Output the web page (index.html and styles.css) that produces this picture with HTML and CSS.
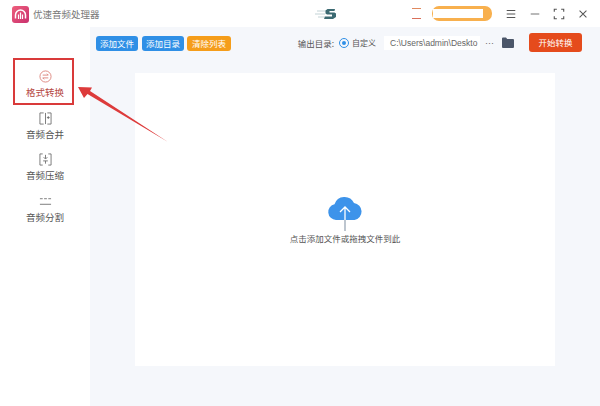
FILE: index.html
```html
<!DOCTYPE html>
<html lang="zh-CN">

<head>
    <meta charset="UTF-8">
    <title>优速音频处理器</title>
    <link rel="stylesheet" href="styles.css">
</head>

<body>
    <div class="app">
        <div class="titlebar">
            <div class="brand">
                <svg class="logo" viewBox="0 0 17 17">
                    <defs>
                        <linearGradient id="logoFill" x1="0" y1="0" x2="1" y2="1">
                            <stop offset="0" stop-color="#ee5f7c"/>
                            <stop offset="1" stop-color="#c9306e"/>
                        </linearGradient>
                    </defs>
                    <rect width="17" height="17" rx="3" fill="url(#logoFill)"/>
                    <path d="M3.5 12.5V9a5 5 0 0 1 10 0v3.5" fill="none" stroke="#fff" stroke-width="1.5"/>
                    <path d="M6.5 13V8.500M8.500 13V6.500M10.500 13V8.500" stroke="#fff" stroke-width="1.200"/>
                </svg>
                <span class="appname">优速音频处理器</span>
            </div>
            <svg class="midlogo" viewBox="0 0 30 16">
                <path d="M5 5h9M3 8h10M6 11h7" stroke="#c3d3d6" stroke-width="1"/>
                <path d="M23 3h-7.500l-2 1.500v3l1.500 1h5v2h-7l-1 2.500h9l3-2v-3.500l-1.500-1h-5v-1.500h5z" fill="#3c6a72"/>
            </svg>
            <div class="userbox">
                <span class="redmark"></span>
                <div class="vip"><span class="vipwhite"></span></div>
            </div>
            <div class="winbtns">
                <svg viewBox="0 0 14 14"><path d="M2 3h10M2 7h10M2 11h10" stroke="#555" stroke-width="1.200"/></svg>
                <svg viewBox="0 0 14 14"><path d="M2 7h10" stroke="#777" stroke-width="1.200"/></svg>
                <svg viewBox="0 0 14 14"><path d="M1.500 4.500v-3h3M9.500 1.500h3v3M12.500 9.500v3h-3M4.500 12.500h-3v-3" fill="none" stroke="#555" stroke-width="1.300"/></svg>
                <svg viewBox="0 0 14 14"><path d="M3 3l8 8M11 3l-8 8" stroke="#555" stroke-width="1.200"/></svg>
            </div>
        </div>

        <div class="content">
            <div class="sidebar">
                <div class="navitem active">
                    <svg viewBox="0 0 14 14">
                        <circle cx="7" cy="7" r="6" fill="none" stroke="#d9786f" stroke-width="0.900"/>
                        <path d="M4 5.500h6M4 8.500h6M8.500 4l1.500 1.500M5.500 10L4 8.500" fill="none" stroke="#d9786f" stroke-width="0.900"/>
                    </svg>
                    <span>格式转换</span>
                </div>
                <div class="navitem">
                    <svg viewBox="0 0 14 14">
                        <path d="M5 1H1v12h4M9 1h4v12H9M7 1v12" fill="none" stroke="#666" stroke-width="0.900"/>
                        <path d="M8.500 6h3M10 4.500v3" stroke="#666" stroke-width="0.900"/>
                    </svg>
                    <span>音频合并</span>
                </div>
                <div class="navitem">
                    <svg viewBox="0 0 14 14">
                        <path d="M4 1H1v12h3M10 1h3v12h-3" fill="none" stroke="#666" stroke-width="0.900"/>
                        <path d="M7 2v4M5 4.500L7 6.500l2-2M4.500 8.500h5M7 8.500v3" fill="none" stroke="#666" stroke-width="0.900"/>
                    </svg>
                    <span>音频压缩</span>
                </div>
                <div class="navitem">
                    <svg viewBox="0 0 14 14">
                        <path d="M1 4h3M5.500 4h3M10 4h3M1 10h12" fill="none" stroke="#666" stroke-width="0.900"/>
                    </svg>
                    <span>音频分割</span>
                </div>
            </div>

            <div class="main">
                <div class="toolbar">
                    <button class="btn blue">添加文件</button>
                    <button class="btn blue">添加目录</button>
                    <button class="btn orange">清除列表</button>
                    <div class="output">
                        <span class="outlabel">输出目录:</span>
                        <span class="radio"></span>
                        <span class="custom">自定义</span>
                        <span class="pathbox">C:\Users\admin\Deskto</span>
                        <span class="dots">···</span>
                        <svg class="folder" viewBox="0 0 12 11">
                            <path d="M0 1.500A1 1 0 0 1 1 .5h3l1.200 1.500H11a1 1 0 0 1 1 1V10a1 1 0 0 1-1 1H1a1 1 0 0 1-1-1z" fill="#4b5669"/>
                        </svg>
                        <button class="btn start">开始转换</button>
                    </div>
                </div>
                <div class="droparea">
                    <svg class="cloud" viewBox="0 0 36 37">
                        <path d="M9 25a8 8 0 0 1-1.500-15.800A10.500 10.500 0 0 1 27 8a8.600 8.600 0 0 1 .5 17z" fill="#3d93ea"/>
                        <path d="M18 25V12M13 17l5-5 5 5" fill="none" stroke="#fff" stroke-width="1.300"/>
                        <path d="M18 25v11" stroke="#9aa7b5" stroke-width="1.300"/>
                    </svg>
                    <span class="droptext">点击添加文件或拖拽文件到此</span>
                </div>
            </div>
        </div>

        <svg class="annotation" viewBox="0 0 600 406">
            <rect x="14" y="59" width="59" height="45" fill="none" stroke="#d93a3a" stroke-width="2"/>
            <path d="M78 87L92 87.500L90 91L168 142L87.500 94L84 98z" fill="#dd3b3b"/>
        </svg>
    </div>
</body>

</html>
```

FILE: styles.css
```css
html {
    margin: 0;
    background-color: white;
}

body {
    margin: 0;
    font-family: "Noto Sans CJK SC", "Liberation Sans", sans-serif;
    color: #555;
}

.app {
    position: relative;
    width: 600px;
    height: 406px;
    display: flex;
    flex-direction: column;
    overflow: hidden;
}

.titlebar {
    height: 27px;
    display: flex;
    align-items: center;
    background-color: white;
}

.brand {
    width: 312px;
    display: flex;
    align-items: center;
    gap: 4px;
    padding-left: 12px;
    box-sizing: border-box;
}

.logo {
    width: 17px;
    height: 17px;
    margin-top: 2px;
}

.appname {
    font-size: 9.5px;
    color: #777;
}

.midlogo {
    width: 30px;
    height: 16px;
}

.userbox {
    display: flex;
    align-items: center;
    margin-left: 70px;
    gap: 11px;
}

.redmark {
    width: 9px;
    height: 9px;
    border-top: 1px solid #e08a60;
    border-bottom: 1px solid #d9705a;
}

.vip {
    width: 60px;
    height: 15px;
    border-radius: 7px;
    background-color: #f8b04e;
    display: flex;
    align-items: center;
    padding-left: 1px;
    box-sizing: border-box;
}

.vipwhite {
    width: 50px;
    height: 9px;
    background-color: white;
}

.winbtns {
    display: flex;
    align-items: center;
    gap: 12px;
    margin-left: 13px;
}

.winbtns svg {
    width: 12px;
    height: 12px;
}

.content {
    flex: 1;
    display: flex;
}

.sidebar {
    width: 90px;
    background-color: white;
    display: flex;
    flex-direction: column;
    padding-top: 43px;
    gap: 12.5px;
    box-sizing: border-box;
}

.navitem {
    width: 78px;
    display: flex;
    flex-direction: column;
    align-items: center;
    font-size: 9.5px;
    line-height: 14px;
    gap: 2px;
    color: #555;
    margin-left: 6px;
}

.navitem svg {
    width: 13px;
    height: 13px;
}

.navitem.active {
    color: #b5483f;
}

.main {
    flex: 1;
    background-color: #f5f7fb;
    display: flex;
    flex-direction: column;
}

.toolbar {
    height: 46px;
    display: flex;
    align-items: flex-start;
    padding: 6px 18px 0 6px;
    gap: 4px;
    box-sizing: border-box;
}

.btn {
    height: 15px;
    width: 42px;
    padding: 0;
    border: none;
    border-radius: 3px;
    font-family: inherit;
    font-size: 8.5px;
    line-height: 15px;
    color: white;
}

.blue,
.orange {
    margin-top: 3px;
}

.blue {
    background-color: #2f8fe6;
}

.orange {
    width: 44px;
    margin-left: -1px;
    background-color: #f59d1a;
}

.output {
    margin-left: auto;
    display: flex;
    align-items: center;
    height: 19px;
}

.outlabel {
    font-size: 8.5px;
    color: #555;
}

.radio {
    width: 4px;
    height: 4px;
    border-radius: 50%;
    background-color: #2f8fe6;
    border: 2px solid #f5f7fb;
    outline: 1px solid #2f8fe6;
    margin-left: 6px;
}

.custom {
    font-size: 8px;
    color: #555;
    margin-left: 4px;
}

.pathbox {
    width: 96px;
    height: 14px;
    margin-left: 8px;
    background-color: white;
    font-family: "Liberation Sans", sans-serif;
    font-size: 8.5px;
    line-height: 14px;
    padding-left: 6px;
    box-sizing: border-box;
    white-space: nowrap;
    color: #666;
}

.dots {
    width: 10px;
    font-family: "Liberation Sans", sans-serif;
    font-size: 9px;
    color: #666;
    margin-left: 5px;
}

.folder {
    width: 12px;
    height: 11px;
    margin-left: 7px;
}

.start {
    width: 53px;
    height: 19px;
    background-color: #e54b1c;
    margin-left: 15px;
}

.droparea {
    width: 420px;
    height: 293px;
    margin-left: 45px;
    background-color: white;
    display: flex;
    flex-direction: column;
    align-items: center;
    padding-top: 122px;
    box-sizing: border-box;
}

.cloud {
    width: 36px;
    height: 37px;
}

.droptext {
    font-size: 8.5px;
    line-height: 12px;
    color: #555;
}

.annotation {
    position: absolute;
    left: 0;
    top: 0;
    width: 600px;
    height: 406px;
    pointer-events: none;
}
```
